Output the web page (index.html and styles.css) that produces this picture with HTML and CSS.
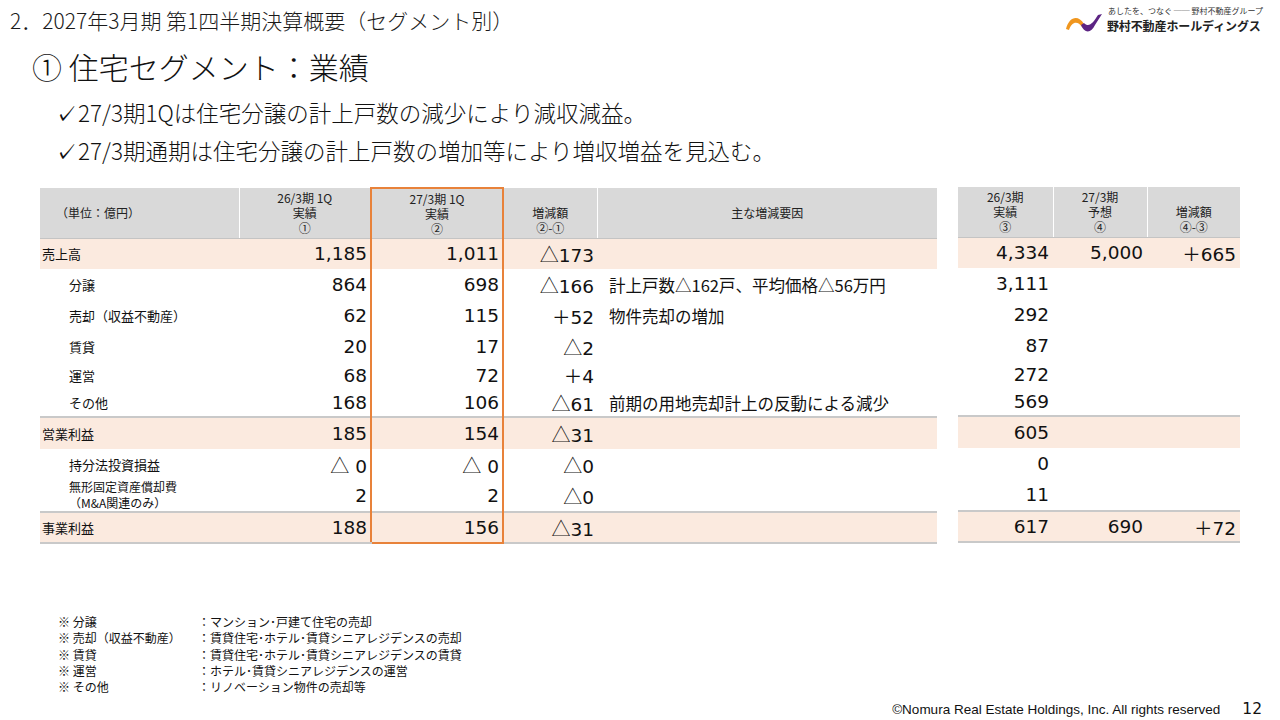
FILE: index.html
```html
<!DOCTYPE html>
<html lang="ja">
<head>
<meta charset="utf-8">
<title>住宅セグメント：業績</title>
<link rel="stylesheet" href="styles.css">
</head>
<body>
<div class="page">
  <header class="top">
    <div class="crumb">2．2027年3月期 第1四半期決算概要（セグメント別）</div>
    <div class="logo">
      <svg class="mark" width="36" height="20" viewBox="0 0 36 20" aria-hidden="true">
        <path d="M0 16 C3 4 12 1 18 11 L16 14 C12 8 6 8 3 17 Z" fill="#f0961e"/>
        <path d="M15 12 C18 20 25 21 29 12 L36 1 L32 2 C27 10 23 15 18 10 Z" fill="#5c2483"/>
      </svg>
      <div class="logo-text">
        <div class="tagline">あしたを、つなぐ ── 野村不動産グループ</div>
        <div class="brand">野村不動産ホールディングス</div>
      </div>
    </div>
  </header>

  <h1 class="heading">① 住宅セグメント：業績</h1>

  <ul class="points">
    <li><span class="check">✓</span>27/3期1Qは住宅分譲の計上戸数の減少により減収減益。</li>
    <li><span class="check">✓</span>27/3期通期は住宅分譲の計上戸数の増加等により増収増益を見込む。</li>
  </ul>

  <div class="tables">
    <table class="grid main">
      <colgroup>
        <col class="c-label"><col class="c-num"><col class="c-num"><col class="c-diff"><col class="c-why">
      </colgroup>
      <thead>
        <tr class="head">
          <th class="unit">（単位：億円）</th>
          <th>26/3期 1Q<br>実績<br>①</th>
          <th class="hl">27/3期 1Q<br>実績<br>②</th>
          <th class="bottom">増減額<br>②-①</th>
          <th>主な増減要因</th>
        </tr>
      </thead>
      <tbody>
        <tr class="sum r-a">
          <td class="lbl">売上高</td><td class="num">1,185</td><td class="num hl">1,011</td><td class="num"><span class="tri">△</span>173</td><td class="why"></td>
        </tr>
        <tr class="r-a">
          <td class="lbl sub">分譲</td><td class="num">864</td><td class="num hl">698</td><td class="num"><span class="tri">△</span>166</td><td class="why">計上戸数△162戸、平均価格△56万円</td>
        </tr>
        <tr class="r-a">
          <td class="lbl sub">売却（収益不動産）</td><td class="num">62</td><td class="num hl">115</td><td class="num">＋52</td><td class="why">物件売却の増加</td>
        </tr>
        <tr class="r-b">
          <td class="lbl sub">賃貸</td><td class="num">20</td><td class="num hl">17</td><td class="num"><span class="tri">△</span>2</td><td class="why"></td>
        </tr>
        <tr class="r-c">
          <td class="lbl sub">運営</td><td class="num">68</td><td class="num hl">72</td><td class="num">＋4</td><td class="why"></td>
        </tr>
        <tr class="r-c">
          <td class="lbl sub">その他</td><td class="num">168</td><td class="num hl">106</td><td class="num"><span class="tri">△</span>61</td><td class="why">前期の用地売却計上の反動による減少</td>
        </tr>
        <tr class="sum sep r-d">
          <td class="lbl">営業利益</td><td class="num">185</td><td class="num hl">154</td><td class="num"><span class="tri">△</span>31</td><td class="why"></td>
        </tr>
        <tr class="r-b">
          <td class="lbl sub">持分法投資損益</td><td class="num"><span class="tri">△</span> 0</td><td class="num hl"><span class="tri">△</span> 0</td><td class="num"><span class="tri">△</span>0</td><td class="why"></td>
        </tr>
        <tr class="r-e">
          <td class="lbl sub two"><span class="ln">無形固定資産償却費</span><span class="ln">（M&amp;A関連のみ）</span></td><td class="num">2</td><td class="num hl">2</td><td class="num"><span class="tri">△</span>0</td><td class="why"></td>
        </tr>
        <tr class="sum sep last r-a">
          <td class="lbl">事業利益</td><td class="num">188</td><td class="num hl">156</td><td class="num"><span class="tri">△</span>31</td><td class="why"></td>
        </tr>
      </tbody>
    </table>

    <table class="grid side">
      <colgroup>
        <col class="c-s1"><col class="c-s2"><col class="c-s3">
      </colgroup>
      <thead>
        <tr class="head">
          <th>26/3期<br>実績<br>③</th>
          <th>27/3期<br>予想<br>④</th>
          <th class="bottom">増減額<br>④-③</th>
        </tr>
      </thead>
      <tbody>
        <tr class="sum r-a"><td class="num">4,334</td><td class="num">5,000</td><td class="num">＋665</td></tr>
        <tr class="r-a"><td class="num">3,111</td><td></td><td></td></tr>
        <tr class="r-a"><td class="num">292</td><td></td><td></td></tr>
        <tr class="r-b"><td class="num">87</td><td></td><td></td></tr>
        <tr class="r-c"><td class="num">272</td><td></td><td></td></tr>
        <tr class="r-c"><td class="num">569</td><td></td><td></td></tr>
        <tr class="sum sep r-d"><td class="num">605</td><td></td><td></td></tr>
        <tr class="r-b"><td class="num">0</td><td></td><td></td></tr>
        <tr class="r-e"><td class="num">11</td><td></td><td></td></tr>
        <tr class="sum sep last r-a"><td class="num">617</td><td class="num">690</td><td class="num">＋72</td></tr>
      </tbody>
    </table>
  </div>

  <div class="notes">
    <span>※ 分譲</span><span>：マンション･戸建て住宅の売却</span>
    <span>※ 売却（収益不動産）</span><span>：賃貸住宅･ホテル･賃貸シニアレジデンスの売却</span>
    <span>※ 賃貸</span><span>：賃貸住宅･ホテル･賃貸シニアレジデンスの賃貸</span>
    <span>※ 運営</span><span>：ホテル･賃貸シニアレジデンスの運営</span>
    <span>※ その他</span><span>：リノベーション物件の売却等</span>
  </div>

  <footer class="foot">
    <span class="copy">©Nomura Real Estate Holdings, Inc. All rights reserved</span>
    <span class="pageno">12</span>
  </footer>
</div>
</body>
</html>
```

FILE: styles.css
```css
* { box-sizing: border-box; }

body {
  margin: 0;
  background: #ffffff;
  color: #111111;
  font-family: "Noto Sans CJK JP", "Noto Sans", sans-serif;
}

.page {
  width: 1280px;
  height: 720px;
  display: flex;
  flex-direction: column;
  overflow: hidden;
}

/* ---------- top bar ---------- */
.top {
  height: 46px;
  display: flex;
  justify-content: space-between;
  align-items: flex-start;
}

.crumb {
  font-size: 21px;
  font-weight: 300;
  line-height: 24px;
  padding: 8px 0 0 10px;
  color: #1a1a1a;
}

.logo {
  display: flex;
  align-items: flex-end;
  gap: 5px;
  padding: 5px 17px 0 0;
}

.mark { display: block; margin-bottom: 3px; }

.logo-text {
  display: flex;
  flex-direction: column;
}

.tagline {
  font-size: 8px;
  line-height: 11px;
  color: #333333;
  padding-left: 1px;
}

.brand {
  font-size: 12px;
  line-height: 20px;
  font-weight: bold;
  color: #222222;
  letter-spacing: -0.1px;
}

/* ---------- heading + bullets ---------- */
.heading {
  margin: 0 0 0 32px;
  font-size: 30px;
  font-weight: 300;
  line-height: 40px;
  height: 40px;
  color: #111111;
}

.points {
  list-style: none;
  margin: 7px 0 0 55px;
  padding: 0;
  font-size: 22.5px;
  font-weight: 300;
  line-height: 38px;
  height: 76px;
  color: #111111;
}

.points li { height: 38px; }

.check {
  font-family: "DejaVu Sans", sans-serif;
  font-size: 22px;
  line-height: 0;
  margin-right: 1px;
}

/* ---------- tables ---------- */
.tables {
  display: flex;
  align-items: flex-start;
  gap: 21px;
  margin: 18px 0 0 40px;
}

.grid {
  table-layout: fixed;
  border-collapse: collapse;
}

.main { width: 897px; }
.side { width: 282px; }

.c-label { width: 199px; }
.c-num { width: 132px; }
.c-diff { width: 94px; }
.c-why { width: 340px; }
.c-s1 { width: 95px; }
.c-s2 { width: 94px; }
.c-s3 { width: 93px; }

.head { height: 50px; }
.r-a { height: 31px; }
.r-b { height: 30px; }
.r-c { height: 28px; }
.r-d { height: 32px; }
.r-e { height: 33px; }

.grid th {
  background: #d9d9d9;
  font-size: 12px;
  line-height: 15px;
  font-weight: normal;
  color: #222222;
  text-align: center;
  vertical-align: middle;
  padding: 0 2px;
  border-right: 1px solid #ffffff;
  border-bottom: 1px solid #c4c4c4;
}

.grid th:last-child { border-right: none; }

.grid th.unit {
  text-align: left;
  padding-left: 16px;
}

.grid th.bottom {
  vertical-align: bottom;
  padding-bottom: 3px;
}

.grid td {
  padding: 0 3px;
  vertical-align: middle;
  white-space: nowrap;
}

.sum td { background: #fbeadf; }
.sep td { border-top: 2px solid #c9c9c9; }
.last td { border-bottom: 2px solid #c9c9c9; }

.lbl {
  font-size: 13px;
  text-align: left;
  color: #111111;
}

.grid td.lbl { padding-left: 2px; }
.grid td.lbl.sub { padding-left: 29px; }

.lbl.two { font-size: 12px; }

.lbl.two .ln {
  display: block;
  height: 16px;
  line-height: 16px;
}

.num {
  font-family: "DejaVu Sans", "Noto Sans CJK JP", sans-serif;
  font-size: 18.5px;
  text-align: right;
  color: #111111;
}

.side td.num { padding-right: 4px; }

.tri {
  font-family: "Noto Sans CJK JP", sans-serif;
  font-size: 19px;
  font-weight: 300;
}

.grid td.why {
  font-size: 16.5px;
  padding-left: 12px;
  color: #111111;
}

.grid th.hl,
.grid td.hl {
  border-left: 2px solid #e8823a;
  border-right: 2px solid #e8823a;
}

.grid th.hl { border-top: 2px solid #e8823a; }
.grid .last td.hl { border-bottom: 2px solid #e8823a; }

/* ---------- footnotes ---------- */
.notes {
  margin: 70px 0 0 58px;
  display: grid;
  grid-template-columns: 140px auto;
  font-size: 12px;
  line-height: 16.3px;
  color: #111111;
}

/* ---------- footer ---------- */
.foot {
  margin-top: auto;
  display: flex;
  justify-content: flex-end;
  align-items: baseline;
  gap: 22px;
  padding: 0 18px 1px 0;
  line-height: 18px;
}

.copy {
  font-family: "Liberation Sans", sans-serif;
  font-size: 13.5px;
  color: #111111;
}

.pageno {
  font-family: "DejaVu Sans", sans-serif;
  font-size: 15.5px;
  color: #111111;
}
```
